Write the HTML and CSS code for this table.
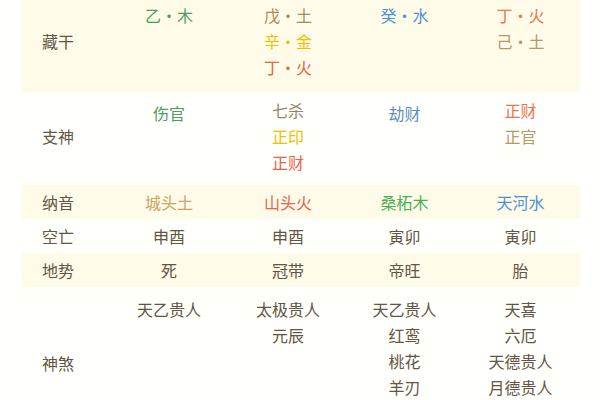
FILE: index.html
```html
<!DOCTYPE html>
<html lang="zh">
<head>
<meta charset="utf-8">
<link rel="stylesheet" href="styles.css">
</head>
<body>
<table class="chart">
  <colgroup>
    <col class="c-label"><col class="c1"><col class="c2"><col class="c3"><col class="c4">
  </colgroup>
  <tr class="row tall first yellow">
    <th>藏干</th>
    <td><div class="t-wood">乙·木</div></td>
    <td><div class="t-earth">戊·土</div><div class="t-metal">辛·金</div><div class="t-fire">丁·火</div></td>
    <td><div class="t-water">癸·水</div></td>
    <td><div class="t-fire2">丁·火</div><div class="t-earth2">己·土</div></td>
  </tr>
  <tr class="row tall white">
    <th>支神</th>
    <td><div class="t-wood single">伤官</div></td>
    <td><div class="t-grey">七杀</div><div class="t-metal">正印</div><div class="t-fire">正财</div></td>
    <td><div class="t-water2 single">劫财</div></td>
    <td><div class="t-fire2">正财</div><div class="t-earth2">正官</div></td>
  </tr>
  <tr class="row short yellow">
    <th>纳音</th>
    <td><div class="t-earth3">城头土</div></td>
    <td><div class="t-fire">山头火</div></td>
    <td><div class="t-wood2">桑柘木</div></td>
    <td><div class="t-water">天河水</div></td>
  </tr>
  <tr class="row short white">
    <th>空亡</th>
    <td>申酉</td>
    <td>申酉</td>
    <td>寅卯</td>
    <td>寅卯</td>
  </tr>
  <tr class="row short yellow">
    <th>地势</th>
    <td>死</td>
    <td>冠带</td>
    <td>帝旺</td>
    <td>胎</td>
  </tr>
  <tr class="row shensha white">
    <th>神煞</th>
    <td><div>天乙贵人</div></td>
    <td><div>太极贵人</div><div>元辰</div></td>
    <td><div>天乙贵人</div><div>红鸾</div><div>桃花</div><div>羊刃</div></td>
    <td><div>天喜</div><div>六厄</div><div>天德贵人</div><div>月德贵人</div></td>
  </tr>
</table>
</body>
</html>
```
FILE: styles.css
```css
html, body {
  margin: 0;
  padding: 0;
  background: #fffffd;
}
body {
  font-family: "Noto Sans CJK SC", "Noto Sans", sans-serif;
  font-size: 16px;
  color: #625545;
  overflow: hidden;
}
.chart {
  border-collapse: collapse;
  margin: -3px 0 0 22px;
  table-layout: fixed;
  width: 558px;
}
.c-label { width: 88px; }
.c1 { width: 118px; }
.c2 { width: 120px; }
.c3 { width: 113px; }
.c4 { width: 119px; }

.chart th,
.chart td {
  line-height: 26px;
  padding: 0;
  text-align: center;
}
.chart th {
  font-weight: normal;
  text-align: left;
  padding-left: 20px;
  vertical-align: middle;
}
.chart td {
  vertical-align: top;
}
.yellow { background: #fefbe9; }
.white { background: #fffffc; }

.tall td, .tall th { padding-top: 5px; padding-bottom: 10px; }
.first td, .first th { padding-bottom: 12px; }
.single { padding-top: 3px; }

.short td, .short th { padding-top: 4px; padding-bottom: 4px; }
.shensha td { padding-top: 9px; padding-bottom: 38px; }
.shensha th { padding-top: 0; padding-bottom: 0; }

.t-wood { color: #4f9c62; }
.t-wood2 { color: #4aae54; }
.t-earth { color: #a48c58; }
.t-earth2 { color: #b39a68; }
.t-earth3 { color: #c9a463; }
.t-metal { color: #f0c000; }
.t-fire { color: #e6644a; }
.t-fire2 { color: #ec7650; }
.t-water { color: #4c95d0; }
.t-water2 { color: #5b8fc0; }
.t-grey { color: #958670; }
```
